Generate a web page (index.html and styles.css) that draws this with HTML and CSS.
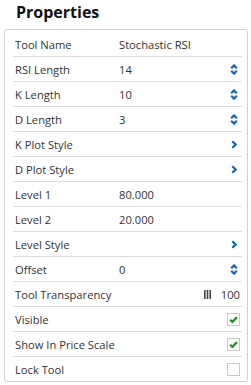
FILE: index.html
```html
<!DOCTYPE html>
<html>
<head>
<meta charset="utf-8">
<link rel="stylesheet" href="styles.css">
</head>
<body>
<h1 class="title">Properties</h1>
<div class="panel">
  <div class="row"><span class="label">Tool Name</span><span class="value">Stochastic RSI</span></div>
  <div class="row"><span class="label">RSI Length</span><span class="value">14</span><svg class="spin" viewBox="0 0 8 11"><path d="M1.2 4.2 L4 1.4 L6.8 4.2 M1.2 6.8 L4 9.6 L6.8 6.8"/></svg></div>
  <div class="row"><span class="label">K Length</span><span class="value">10</span><svg class="spin" viewBox="0 0 8 11"><path d="M1.2 4.2 L4 1.4 L6.8 4.2 M1.2 6.8 L4 9.6 L6.8 6.8"/></svg></div>
  <div class="row"><span class="label">D Length</span><span class="value">3</span><svg class="spin" viewBox="0 0 8 11"><path d="M1.2 4.2 L4 1.4 L6.8 4.2 M1.2 6.8 L4 9.6 L6.8 6.8"/></svg></div>
  <div class="row"><span class="label">K Plot Style</span><span class="value"></span><svg class="chev" viewBox="0 0 6 9"><path d="M1.3 1.2 L4.6 4.5 L1.3 7.8"/></svg></div>
  <div class="row"><span class="label">D Plot Style</span><span class="value"></span><svg class="chev" viewBox="0 0 6 9"><path d="M1.3 1.2 L4.6 4.5 L1.3 7.8"/></svg></div>
  <div class="row"><span class="label">Level 1</span><span class="value">80.000</span></div>
  <div class="row"><span class="label">Level 2</span><span class="value">20.000</span></div>
  <div class="row"><span class="label">Level Style</span><span class="value"></span><svg class="chev" viewBox="0 0 6 9"><path d="M1.3 1.2 L4.6 4.5 L1.3 7.8"/></svg></div>
  <div class="row"><span class="label">Offset</span><span class="value">0</span><svg class="spin" viewBox="0 0 8 11"><path d="M1.2 4.2 L4 1.4 L6.8 4.2 M1.2 6.8 L4 9.6 L6.8 6.8"/></svg></div>
  <div class="row"><span class="label">Tool Transparency</span><span class="trans"><svg class="bars" viewBox="0 0 7 9"><rect x="0" y="0" width="1.6" height="9"/><rect x="2.7" y="0" width="1.6" height="9"/><rect x="5.4" y="0" width="1.6" height="9"/></svg><span class="num">100</span></span></div>
  <div class="row"><span class="label">Visible</span><span class="value"></span><span class="check"><svg viewBox="0 0 12 12"><path d="M2.3 6.2 L4.8 8.6 L9.8 3.4"/></svg></span></div>
  <div class="row"><span class="label">Show In Price Scale</span><span class="value"></span><span class="check"><svg viewBox="0 0 12 12"><path d="M2.3 6.2 L4.8 8.6 L9.8 3.4"/></svg></span></div>
  <div class="row"><span class="label">Lock Tool</span><span class="value"></span><span class="check"></span></div>
</div>
</body>
</html>
```
FILE: styles.css
```css
html, body {
  margin: 0;
  padding: 0;
  background: #ffffff;
}
body {
  font-family: "Open Sans", "Liberation Sans", sans-serif;
  color: #333333;
  padding: 0 5px 0 4px;
}
.title {
  margin: 0;
  padding: 0 0 0 12px;
  height: 29px;
  font-size: 16px;
  font-weight: 700;
  color: #111111;
  line-height: 24px;
}
.panel {
  border: 1px solid #cfcfcf;
  border-radius: 3px;
  padding: 2px 5px 0 8px;
  width: 229px;
}
.row {
  display: flex;
  align-items: center;
  height: 24px;
  border-bottom: 1px solid #dcdcdc;
  font-size: 11.2px;
}
.row:last-child {
  border-bottom: none;
}
.label {
  width: 104px;
  padding-left: 2px;
  flex: none;
  white-space: nowrap;
}
.value {
  flex: 1;
}
.spin {
  width: 8px;
  height: 11px;
  margin-right: 4px;
}
.spin path, .chev path {
  fill: none;
  stroke: #1166b8;
  stroke-width: 2.2;
  stroke-linecap: butt;
  stroke-linejoin: miter;
}
.chev {
  width: 6px;
  height: 9px;
  margin-right: 5px;
}
.trans {
  flex: 1;
  display: flex;
  justify-content: flex-end;
  align-items: center;
  margin-right: 2px;
}
.bars {
  width: 7px;
  height: 9px;
  fill: #444444;
  margin-right: 10px;
}
.check {
  width: 11px;
  height: 11px;
  border: 1px solid #c8c8c8;
  margin-right: 2px;
  display: flex;
}
.check svg {
  width: 11px;
  height: 11px;
}
.check path {
  fill: none;
  stroke: #249224;
  stroke-width: 2.4;
}
```
